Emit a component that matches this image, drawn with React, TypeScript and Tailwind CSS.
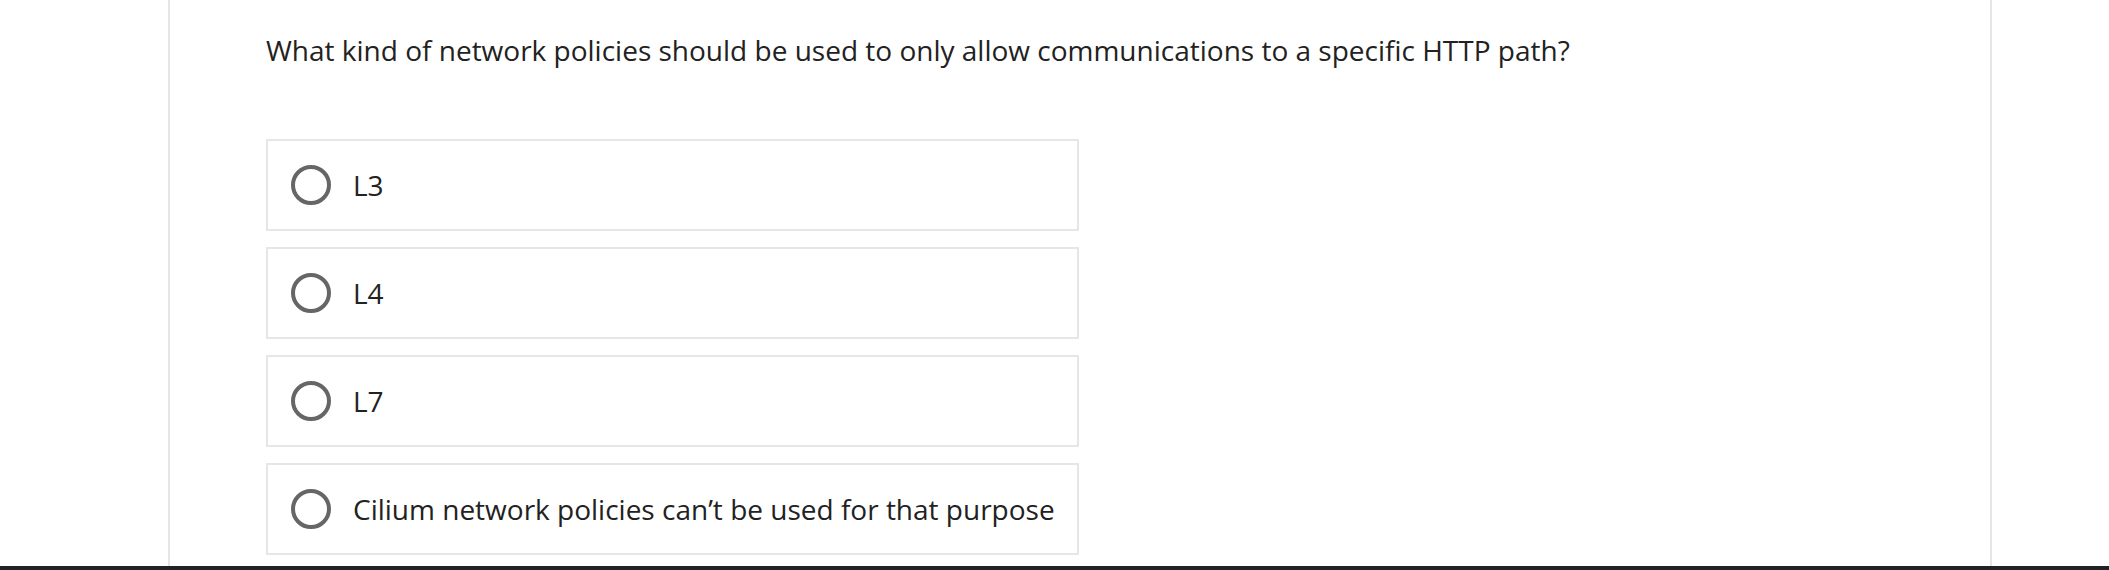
const options = ["L3", "L4", "L7", "Cilium network policies can\u2019t be used for that purpose"];

function Radio() {
  return <span className="block h-[40px] w-[40px] shrink-0 rounded-full border-[4px] border-[#666666]" />;
}

export default function App() {
  return (
    <div className="flex h-[570px] w-[2109px] flex-col overflow-hidden bg-white font-['Open_Sans',sans-serif] text-[#222222]">
      <div className="flex-1">
        <div className="ml-[168px] h-full w-[1824px] border-x-2 border-[#e6e6e6] pl-[96px]">
          <p className="pt-[30px] text-[28px] leading-[40px]">
            What kind of network policies should be used to only allow communications to a specific HTTP path?
          </p>
          <div className="mt-[69px] flex flex-col gap-[16px]">
            {options.map((o) => (
              <label
                key={o}
                className="flex h-[92px] w-[813px] items-center gap-[22px] border-2 border-[#e6e6e6] pl-[23px]"
              >
                <Radio />
                <span className="text-[28px] leading-[38px]">{o}</span>
              </label>
            ))}
          </div>
        </div>
      </div>
      <div className="h-[4px] bg-[#222222]" />
    </div>
  );
}
